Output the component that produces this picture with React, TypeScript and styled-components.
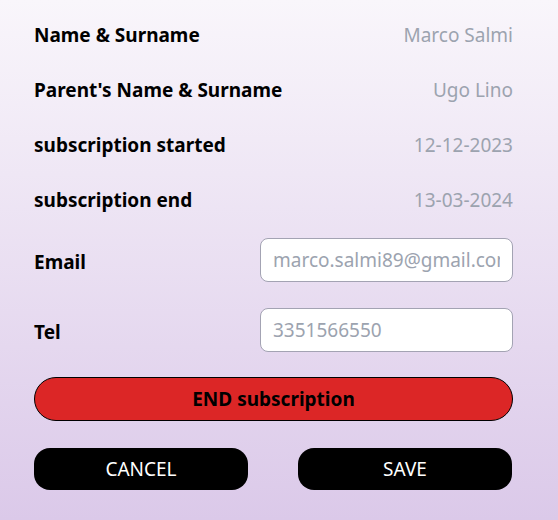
import React from "react";
import styled, { createGlobalStyle } from "styled-components";

const GlobalStyle = createGlobalStyle`
  html, body {
    margin: 0;
    padding: 0;
  }
  body {
    font-family: "Noto Sans", "Open Sans", sans-serif;
  }
`;

const info = [
  { label: "Name & Surname", value: "Marco Salmi" },
  { label: "Parent's Name & Surname", value: "Ugo Lino" },
  { label: "subscription started", value: "12-12-2023" },
  { label: "subscription end", value: "13-03-2024" },
];

const App: React.FC = () => {
  return (
    <>
      <GlobalStyle />
      <Page>
        <Form>
          <InfoList>
            {info.map((row) => (
              <InfoRow key={row.label}>
                <Label>{row.label}</Label>
                <Value>{row.value}</Value>
              </InfoRow>
            ))}
          </InfoList>
          <FieldRow $top={23}>
            <FieldLabel>Email</FieldLabel>
            <Input defaultValue="marco.salmi89@gmail.com" />
          </FieldRow>
          <FieldRow $top={26}>
            <FieldLabel>Tel</FieldLabel>
            <Input defaultValue="3351566550" />
          </FieldRow>
          <EndButton>END subscription</EndButton>
          <Actions>
            <ActionButton>CANCEL</ActionButton>
            <ActionButton>SAVE</ActionButton>
          </Actions>
        </Form>
      </Page>
    </>
  );
};

export default App;

const Page = styled.div`
  width: 558px;
  height: 520px;
  box-sizing: border-box;
  background: linear-gradient(180deg, #f9f6fb 0%, #dbc9e9 100%);
  padding: 20px 45px 0 34px;
`;

const Form = styled.div`
  display: flex;
  flex-direction: column;
`;

const InfoList = styled.div`
  display: flex;
  flex-direction: column;
  gap: 25px;
`;

const InfoRow = styled.div`
  height: 30px;
  display: flex;
  align-items: center;
  justify-content: space-between;
`;

const Label = styled.div`
  color: #000000;
  font-size: 19px;
  font-weight: 700;
`;

const FieldLabel = styled(Label)`
  padding-top: 3px;
`;

const Value = styled.div`
  color: #9ca3af;
  font-size: 19px;
  font-weight: 400;
`;

const FieldRow = styled.div<{ $top: number }>`
  margin-top: ${(p) => p.$top}px;
  display: flex;
  align-items: center;
  justify-content: space-between;
`;

const Input = styled.input`
  width: 253px;
  height: 44px;
  box-sizing: border-box;
  border: 1px solid #a3a3b3;
  border-radius: 8px;
  background: #ffffff;
  padding: 0 12px;
  font-family: "Noto Sans", "Open Sans", sans-serif;
  font-size: 19px;
  color: #9ca3af;
  outline: none;
`;

const EndButton = styled.button`
  margin-top: 25px;
  height: 44px;
  width: 100%;
  border: 1px solid #000000;
  border-radius: 22px;
  background: #dc2626;
  color: #000000;
  font-family: "Noto Sans", "Open Sans", sans-serif;
  font-size: 19px;
  font-weight: 700;
  cursor: pointer;
`;

const Actions = styled.div`
  margin-top: 27px;
  display: grid;
  grid-template-columns: 214px 214px;
  gap: 50px;
`;

const ActionButton = styled.button`
  height: 42px;
  border: none;
  border-radius: 16px;
  background: #000000;
  color: #ffffff;
  font-family: "Noto Sans", "Open Sans", sans-serif;
  font-size: 19px;
  font-weight: 400;
  cursor: pointer;
`;
